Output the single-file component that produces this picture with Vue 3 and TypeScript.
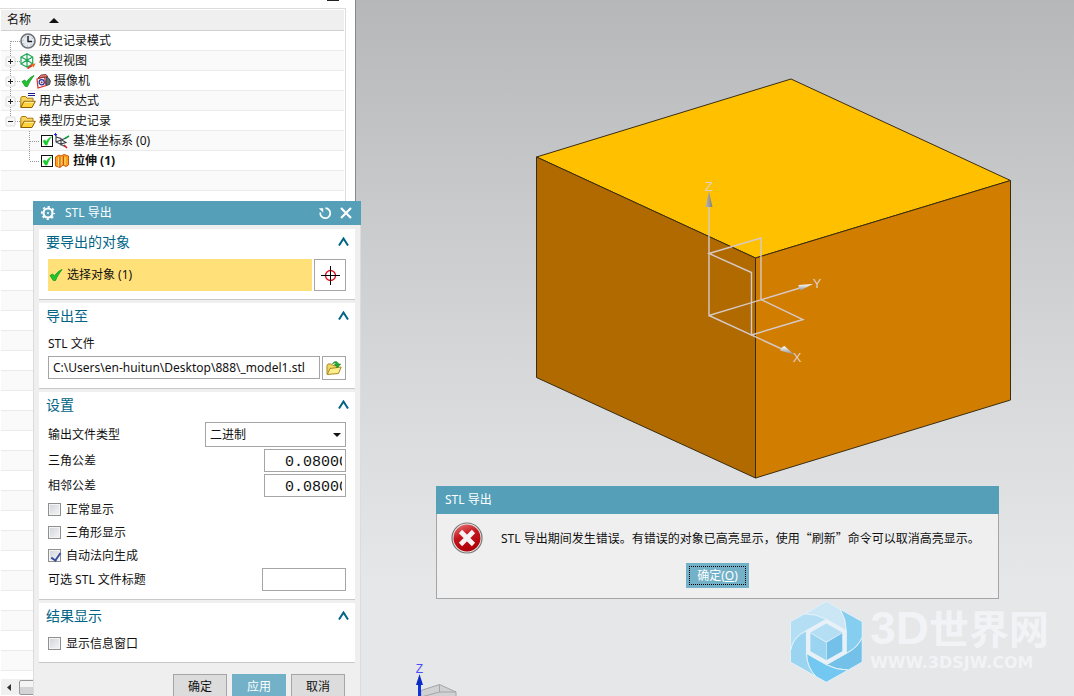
<script setup lang="ts">
import { ref } from 'vue'

interface TreeNode {
  label: string
  icon: 'clock' | 'views' | 'camera' | 'expr' | 'folder'
  expander?: 'plus' | 'minus'
  ticked?: boolean
  first?: boolean
}

interface ChildNode {
  label: string
  icon: 'csys' | 'extrude'
  last: boolean
  bold: boolean
}

const nodes: TreeNode[] = [
  { label: '历史记录模式', icon: 'clock', first: true },
  { label: '模型视图', icon: 'views', expander: 'plus' },
  { label: '摄像机', icon: 'camera', expander: 'plus', ticked: true },
  { label: '用户表达式', icon: 'expr', expander: 'plus' },
  { label: '模型历史记录', icon: 'folder', expander: 'minus' },
]

const children: ChildNode[] = [
  { label: '基准坐标系 (0)', icon: 'csys', last: false, bold: false },
  { label: '拉伸 (1)', icon: 'extrude', last: true, bold: true },
]

const emptyRows = 25

const filePath = ref('C:\\Users\\en-huitun\\Desktop\\888\\_model1.stl')
const fileType = ref('二进制')
const triangleTol = ref('0.08000')
const adjacentTol = ref('0.08000')
const headerText = ref('')
const showInfo = ref(false)
const options = ref([
  { id: 'normal', label: '正常显示', on: false },
  { id: 'triangle', label: '三角形显示', on: false },
  { id: 'autonormal', label: '自动法向生成', on: true },
])
</script>

<template>
  <div class="app" lang="zh-CN">
    <aside class="sidebar">
      <span class="pin"></span>
      <div class="tree">
        <button class="tree-head" type="button">
          名称
          <svg width="10" height="5" viewBox="0 0 10 5"><path d="M0 5 5 0l5 5z" fill="#111" /></svg>
        </button>
        <ul class="rows">
          <li v-for="n in nodes" :key="n.label" class="row">
            <svg class="gutter" width="19" height="20" viewBox="0 0 19 20">
              <path
                :d="n.first ? 'M9.5 10v10' : n.expander === 'minus' ? 'M9.5 0v10' : 'M9.5 0v20'"
                class="dots"
              />
              <path d="M10 10.500h9" class="dots" />
              <template v-if="n.expander">
                <rect x="5" y="6" width="9" height="9" rx="1" fill="#f8f8f8" stroke="#ddd" />
                <path d="M7 10.500h5" stroke="#222" />
                <path v-if="n.expander === 'plus'" d="M9.500 8v5" stroke="#222" />
              </template>
            </svg>
            <svg v-if="n.ticked" class="tick" width="14" height="14" viewBox="0 0 14 14">
              <path d="M1 7.500 3.800 6 5.300 8.200C7 5.500 9.500 3 13 1.500 10.500 5 8 8.500 6.500 12.500H4.300z" fill="#1fc42f" stroke="#0f9a20" stroke-width=".8" />
            </svg>
            <svg v-if="n.icon === 'clock'" class="ico" width="16" height="16" viewBox="0 0 16 16">
              <circle cx="8" cy="8" r="7" fill="#e6ebf2" stroke="#6c6f76" stroke-width="1.600" />
              <circle cx="8" cy="8" r="5" fill="none" stroke="#8d93a0" stroke-dasharray="1 2.900" />
              <path d="M8 3v5.500h4" fill="none" stroke="#1c1c24" stroke-width="1.400" />
            </svg>
            <svg v-else-if="n.icon === 'views'" class="ico" width="16" height="16" viewBox="0 0 16 16">
              <path d="M7 .8 12.700 4v7L7 14 1 11V4zM1 4l6 3 5.700-3M7 7v7M7 1v6M1 11l6-4 5.700 4" fill="none" stroke="#1fa658" stroke-width="1.200" />
              <path d="M7.500 15.500 12 12.500" stroke="#e0301e" stroke-width="1.600" />
              <path d="m11 11 4.500-.5-2 4z" fill="#f06418" />
            </svg>
            <svg v-else-if="n.icon === 'camera'" class="ico" width="16" height="16" viewBox="0 0 16 16">
              <path d="M2 6 9.500 4l1.500 8.500L3 15z" fill="#fff" stroke="#d8302a" stroke-width="1.200" />
              <path d="M3 5 6 2l5-.5 2 2.500-3 0z" fill="#e58078" stroke="#6d2723" stroke-width=".8" />
              <path d="m11 4 2.500 1 2 3-1 3.500-3 1z" fill="#6a707c" stroke="#222" stroke-width=".7" />
              <circle cx="6.700" cy="9.300" r="2.600" fill="#dfe8ff" stroke="#203a9a" stroke-width="1.200" />
              <circle cx="6.700" cy="9.300" r=".9" fill="#c01818" />
            </svg>
            <svg v-else class="ico" width="16" height="16" viewBox="0 0 16 16">
              <path d="M.8 14V5l1-1.500h4l1.200 1.700h6V9" fill="#f9d560" stroke="#a8790e" />
              <path d="M.8 14.500 4 8.300h11.300L12 14.500z" fill="#ffd23c" stroke="#8a5c04" />
              <path d="M4.500 9.300h9.500" stroke="#fff2b4" />
              <path v-if="n.icon === 'expr'" d="M8 .5h7M8 2.500h7" stroke="#1a1a8c" />
            </svg>
            <span>{{ n.label }}</span>
          </li>
          <li v-for="c in children" :key="c.label" class="row child">
            <svg class="branch" width="12" height="20" viewBox="0 0 12 20">
              <path :d="c.last ? 'M1.500 0v10' : 'M1.500 0v20'" class="dots" />
              <path d="M2 10.500h9" class="dots" />
            </svg>
            <svg width="12" height="13" viewBox="0 0 12 13">
              <rect x=".5" y="1.500" width="11" height="11" fill="#fff" stroke="#111" />
              <path d="M2 7 4 6l1.200 2C6.500 5.500 8 3.800 10.500 2.800 8.500 5 7.300 7.500 6 11H4.300z" fill="#14cc28" stroke="#14cc28" stroke-width=".6" />
            </svg>
            <svg v-if="c.icon === 'csys'" class="ico" width="16" height="16" viewBox="0 0 16 16">
              <path d="M2 2v7l9 4.500M2 9l10-4M2 4l5 1.500v7M7 6.500l5 3-5 1.500" fill="none" stroke="#3a4046" stroke-width="1.100" />
              <path d="M0 1.500h3M1.500 0v3" stroke="#1c2ce0" />
              <path d="m11 5.500 4-2.500" stroke="#14a040" stroke-width="1.600" />
              <path d="m10 12 3 3" stroke="#d01c30" stroke-width="1.600" />
            </svg>
            <svg v-else class="ico" width="16" height="16" viewBox="0 0 16 16">
              <path d="M1.500 4 5 2l2 1 3-1.500L14.500 3v9L12 13.500 9 12l-3 2.500L1.500 13z" fill="#f9a11c" stroke="#d2560c" />
              <path d="M4.500 4.500v9M7 4v8.500M11 4v8" stroke="#ffe08a" />
              <path d="M6 4v10M9.500 3v9" stroke="#b8480a" stroke-width=".8" />
            </svg>
            <span :class="{ bold: c.bold }">{{ c.label }}</span>
          </li>
          <li v-for="i in emptyRows" :key="i" class="row"></li>
        </ul>
      </div>
      <div class="hscroll">
        <button type="button" class="arrow" aria-label="向左滚动">
          <svg width="4" height="7" viewBox="0 0 4 7"><path d="M4 0v7L0 3.500z" fill="#333" /></svg>
        </button>
        <span class="thumb"></span>
      </div>
    </aside>

    <main class="viewport">
      <svg class="scene" viewBox="356 0 718 696" preserveAspectRatio="xMidYMid meet">
        <defs>
          <linearGradient id="coneV" x1="0" x2="1" y1="0" y2="0">
            <stop offset="0" stop-color="#b8b8b8" />
            <stop offset="1" stop-color="#808080" />
          </linearGradient>
          <linearGradient id="coneH" x1="0" x2="0" y1="0" y2="1">
            <stop offset="0" stop-color="#ffffff" />
            <stop offset="1" stop-color="#8e8e8e" />
          </linearGradient>
        </defs>
        <g stroke="#3a2c12" stroke-width="1" stroke-linejoin="round">
          <path d="M791 79 1010.500 180.500 755.500 258 536.500 157z" fill="#ffc000" />
          <path d="M536.500 157 755.500 258V478L536.500 377.500z" fill="#b06a00" />
          <path d="M755.500 258 1010.500 180.500V400L755.500 478z" fill="#d17d00" />
        </g>
        <g fill="none" stroke="#d6c9c6" stroke-width="1.400">
          <path d="M709 207V315.500L800 288M709 315.500 784 350" />
          <path d="M709 253.500 761 238V299.500L803 319.500 751.500 335V272.500z" />
        </g>
        <path d="M709 191.500 712.500 207h-7z" fill="url(#coneV)" />
        <path d="M813 284 800.500 290.500Q798 288 798.500 285z" fill="url(#coneH)" />
        <path d="M794 354.500 780 350.500Q781 347 784.500 346z" fill="url(#coneH)" />
        <g class="axis" text-anchor="middle">
          <text x="709" y="191">Z</text>
          <text x="817" y="288">Y</text>
          <text x="797" y="362">X</text>
        </g>
        <path d="M421 690.500 439.500 684.500 456 692V700H421z" fill="#d0d1d2" stroke="#a4a5a6" />
        <path d="M439.500 684.500V692L421 697M439.500 692 456 692" fill="none" stroke="#a4a5a6" />
        <path d="M419.500 684V700" stroke="#0c34d8" stroke-width="3" />
        <path d="M419.500 674 423 685h-7z" fill="#0a2cc4" />
        <text class="axis-z" x="419.500" y="673" text-anchor="middle">Z</text>
      </svg>
      <div class="watermark">
        <svg width="73" height="82" viewBox="332 363 219 247">
          <g stroke="#e4f1f8" stroke-width="3" stroke-linejoin="round">
            <path d="M375 402 441 364l42 24q18 30 18 64L441 418q-32-17-66-16z" fill="#cbe6f4" />
            <path d="M483 388 549 425v48q-14 30-48 48v-69q0-34-18-64z" fill="#85cef0" />
            <path d="M549 473v74l-42 24q-36 0-66-16l60-34q36-18 48-48z" fill="#73c0e8" />
            <path d="M507 571 441 608l-32-18q-27-28-28-69l60 34q30 16 66 16z" fill="#72c8f1" />
            <path d="M333 512v35l76 43q-27-28-28-69v-69q-42 20-48 60z" fill="#9ad4f0" />
            <path d="M333 512v-87l42-23q34-1 66 16l-60 34q-42 20-48 60z" fill="#b3def4" />
          </g>
          <path d="M441 418 501 452v69l-60 34-60-34v-69z" fill="#e8f1f7" />
          <path d="M441 431 489 458l-48 28-48-28z" fill="#b3def4" />
          <path d="M393 460 440 488v53l-47-27z" fill="#9ad4f0" />
          <path d="M489 460 442 488v53l47-27z" fill="#73c0e8" />
        </svg>
        <div class="wm-text">
          <div class="wm-name"><span class="wm-latin">3D</span>世界网</div>
          <div class="wm-url">WWW.3DSJW.COM</div>
        </div>
      </div>
    </main>

    <section class="dialog" aria-label="STL 导出">
      <header class="titlebar">
        <svg width="16" height="16" viewBox="0 0 16 16">
          <circle cx="8" cy="8" r="4.500" fill="none" stroke="#fff" stroke-width="2.200" />
          <circle cx="8" cy="8" r="6.200" fill="none" stroke="#fff" stroke-width="1.800" stroke-dasharray="2.200 2.670" stroke-dashoffset="1.100" />
          <circle cx="8" cy="8" r="1" fill="#fff" />
        </svg>
        <h1>STL 导出</h1>
        <button type="button" aria-label="重置">
          <svg width="14" height="14" viewBox="0 0 14 14">
            <path d="M7.500 2.200A5 5 0 1 1 2.300 6.500" fill="none" stroke="#fff" stroke-width="1.700" />
            <path d="M.8 2.200h4.400v4.400z" fill="#fff" />
          </svg>
        </button>
        <button type="button" aria-label="关闭">
          <svg width="12" height="12" viewBox="0 0 12 12"><path d="m1 1 10 10M11 1 1 11" stroke="#fff" stroke-width="2.200" /></svg>
        </button>
      </header>

      <div class="groups">
        <section class="group">
          <button class="group-head" type="button">
            要导出的对象
            <svg width="11" height="9" viewBox="0 0 11 9"><path d="M1 8.500 5.500 1.500l4.500 7" fill="none" stroke="#006487" stroke-width="2" /></svg>
          </button>
          <div class="pick">
            <button class="pick-main" type="button">
              <svg width="14" height="14" viewBox="0 0 14 14">
                <path d="M1 7.500 3.800 6 5.300 8.200C7 5.500 9.500 3 13 1.500 10.500 5 8 8.500 6.500 12.500H4.300z" fill="#1fc42f" stroke="#0f9a20" stroke-width=".8" />
              </svg>
              选择对象 (1)
            </button>
            <button class="pick-aim" type="button" aria-label="选择">
              <svg width="19" height="19" viewBox="0 0 19 19">
                <circle cx="9.500" cy="9.500" r="5" fill="none" stroke="#e01020" stroke-width="1.300" />
                <path d="M0 9.500h19M9.500 0v19" stroke="#000" />
              </svg>
            </button>
          </div>
        </section>

        <section class="group">
          <button class="group-head" type="button">
            导出至
            <svg width="11" height="9" viewBox="0 0 11 9"><path d="M1 8.500 5.500 1.500l4.500 7" fill="none" stroke="#006487" stroke-width="2" /></svg>
          </button>
          <label class="file-label" for="path">STL 文件</label>
          <div class="file">
            <input id="path" v-model="filePath" type="text" class="box path" />
            <button type="button" class="box browse" aria-label="浏览">
              <svg width="16" height="16" viewBox="0 0 16 16">
                <path d="M1 14V5.500L2 4h3.500L7 5.500h5V8" fill="#f0d860" stroke="#a88a20" />
                <path d="M1.200 14.500 4 8.500 15.200 7 12.500 13.500z" fill="#fbec8c" stroke="#a88a20" />
                <path d="M6.500 4C8 .5 12 1 12.500 4h2.300l-3.600 4L8.500 4h1.800C10 2.600 8 2.500 6.500 4z" fill="#25a832" stroke="#13801f" stroke-width=".5" />
              </svg>
            </button>
          </div>
        </section>

        <section class="group">
          <button class="group-head" type="button">
            设置
            <svg width="11" height="9" viewBox="0 0 11 9"><path d="M1 8.500 5.500 1.500l4.500 7" fill="none" stroke="#006487" stroke-width="2" /></svg>
          </button>
          <div class="fields">
            <div class="field">
              <label for="type">输出文件类型</label>
              <div class="select-wrap">
                <select id="type" v-model="fileType" class="box type">
                  <option>二进制</option>
                  <option>文本</option>
                </select>
                <svg class="caret" width="8" height="4" viewBox="0 0 8 4"><path d="M0 0h8L4 4z" fill="#111" /></svg>
              </div>
            </div>
            <div class="field">
              <label for="tri">三角公差</label>
              <input id="tri" v-model="triangleTol" type="text" class="box num" />
            </div>
            <div class="field">
              <label for="adj">相邻公差</label>
              <input id="adj" v-model="adjacentTol" type="text" class="box num" />
            </div>
          </div>
          <div class="checks">
            <label v-for="o in options" :key="o.id" class="check">
              <input v-model="o.on" type="checkbox" />{{ o.label }}
            </label>
          </div>
          <div class="field head-field">
            <label for="head">可选 STL 文件标题</label>
            <input id="head" v-model="headerText" type="text" class="box head" />
          </div>
        </section>

        <section class="group last">
          <button class="group-head" type="button">
            结果显示
            <svg width="11" height="9" viewBox="0 0 11 9"><path d="M1 8.500 5.500 1.500l4.500 7" fill="none" stroke="#006487" stroke-width="2" /></svg>
          </button>
          <label class="check"><input v-model="showInfo" type="checkbox" />显示信息窗口</label>
        </section>
      </div>

      <footer class="actions">
        <button type="button">确定</button>
        <button type="button" class="primary">应用</button>
        <button type="button">取消</button>
      </footer>
    </section>

    <section class="alert" role="alertdialog" aria-label="STL 导出">
      <header class="alert-title">STL 导出</header>
      <div class="alert-body">
        <svg width="32" height="32" viewBox="0 0 32 32">
          <defs>
            <linearGradient id="errRed" x1="0" x2="0.400" y1="0" y2="1">
              <stop offset="0" stop-color="#e87a7a" />
              <stop offset=".5" stop-color="#c4141c" />
              <stop offset="1" stop-color="#b00008" />
            </linearGradient>
          </defs>
          <circle cx="16" cy="16" r="15" fill="#e8e8e8" stroke="#777" stroke-width="1.200" />
          <circle cx="16" cy="16" r="13.500" fill="url(#errRed)" />
          <path d="m9.500 9.500 13 13M22.500 9.500l-13 13" stroke="#f4f4f4" stroke-width="4.600" />
        </svg>
        <p>STL 导出期间发生错误。有错误的对象已高亮显示，使用<span class="cjk">“刷新”</span>命令可以取消高亮显示。</p>
      </div>
      <button type="button" class="ok">确定(<u>O</u>)</button>
    </section>
  </div>
</template>

<style>
html,
body {
  margin: 0;
  overflow: hidden;
}
</style>

<style scoped>
.app {
  position: relative;
  display: grid;
  grid-template-columns: 356px 1fr;
  height: 100vh;
  overflow: hidden;
  font: 12px/20px "Noto Sans", "Noto Sans CJK SC", sans-serif;
  color: #111;
}
* {
  box-sizing: border-box;
}
button,
input,
select {
  font: inherit;
  color: inherit;
  margin: 0;
  padding: 0;
  border-radius: 0;
  outline: none;
}
button {
  border: 0;
  background: none;
}
svg {
  display: block;
  flex: none;
}

.sidebar {
  display: flex;
  flex-direction: column;
  min-height: 0;
  overflow: hidden;
  background: #fff;
  border-right: 1px solid #7f8c8d;
}
.pin {
  flex: none;
  align-self: flex-end;
  width: 12px;
  height: 1px;
  margin: 0 16px 7px 0;
  background: #222;
}
.tree {
  flex: none;
  margin-right: 9px;
  padding: 1px 1px 0 1px;
  border: solid #dcdcdc;
  border-width: 1px 1px 0 0;
}
.tree-head {
  display: flex;
  align-items: center;
  gap: 18px;
  width: 100%;
  height: 21px;
  padding-left: 6px;
  background: #efefef;
  border-bottom: 1px solid #d0d0d0;
}
.rows {
  margin: 0;
  padding: 0;
  list-style: none;
}
.row {
  display: flex;
  align-items: center;
  height: 20px;
  border-bottom: 1px solid #ebebeb;
  line-height: 19px;
  white-space: nowrap;
}
.row:nth-child(even) {
  background: #fafafa;
}
.ico {
  margin-right: 3px;
}
.tick {
  margin-left: 1px;
}
.gutter,
.branch {
  align-self: flex-start;
}
.child {
  padding-left: 27px;
  gap: 1px;
}
.child .ico {
  margin-right: 2px;
}
.dots {
  fill: none;
  stroke: #999;
  stroke-dasharray: 1 1;
}
.bold {
  font-weight: 700;
}
.hscroll {
  flex: none;
  display: flex;
  align-items: center;
  gap: 2px;
  height: 16px;
  margin: 8px 9px 0 1px;
  background: #f0f0f0;
}
.arrow {
  display: grid;
  place-items: center;
  width: 16px;
  height: 16px;
}
.thumb {
  width: 140px;
  height: 15px;
  border: 1px solid #989898;
  border-radius: 2px;
  background: linear-gradient(#f4f4f4 45%, #d4d4d6 50%);
}

.viewport {
  position: relative;
  min-width: 0;
  min-height: 0;
  background: linear-gradient(#b6b7b9, #c9cacc 30%, #d9dadc 58%, #e6e7e9 84%, #e6e7e9);
}
.scene {
  width: 100%;
  height: 100%;
}
.axis {
  font: 13px "Liberation Sans", sans-serif;
  fill: #ddd0cc;
}
.axis-z {
  font: 12px "Liberation Sans", sans-serif;
  fill: #4a4cff;
}
.watermark {
  position: absolute;
  right: 25px;
  bottom: 13px;
  display: flex;
  align-items: center;
  gap: 7px;
  color: #f2f3f6;
}
.wm-text {
  display: flex;
  flex-direction: column;
  gap: 2px;
  padding-bottom: 8px;
}
.wm-name {
  font: 700 40px/46px "Liberation Sans", "Noto Sans CJK SC", sans-serif;
  white-space: nowrap;
}
.wm-latin {
  font-size: 46px;
}
.wm-url {
  font: 700 16px/16px "DejaVu Sans", sans-serif;
}

.dialog {
  position: absolute;
  left: 33px;
  top: 201px;
  width: 328px;
  background: #efefef;
  border: solid #dcdcdc;
  border-width: 0 1px;
}
.titlebar {
  display: flex;
  align-items: center;
  gap: 8px;
  height: 24px;
  margin: 0 -1px;
  padding: 0 9px 0 7px;
  background: #559fb9;
  color: #fff;
}
.titlebar h1 {
  flex: 1;
  margin: 0 0 0 1px;
  font-size: 12px;
  font-weight: 400;
}
.groups {
  display: flex;
  flex-direction: column;
  gap: 3px;
  padding: 4px 5px 0;
}
.group {
  display: flex;
  flex-direction: column;
  padding: 0 9px 8px;
  background: #fff;
  border-bottom: 1px solid #c8c8c8;
}
.group-head {
  display: flex;
  justify-content: space-between;
  align-items: center;
  height: 26px;
  margin: 0 -4px 0 -2px;
  font-size: 14px;
  color: #006487;
}
.group-head svg {
  margin: 0 1px 2px 0;
}
.pick {
  display: flex;
  gap: 2px;
  margin-top: 4px;
}
.pick-main {
  flex: 1;
  display: flex;
  align-items: center;
  gap: 4px;
  height: 32px;
  padding-left: 1px;
  background: #ffe079;
}
.pick-aim {
  display: grid;
  place-items: center;
  width: 32px;
  height: 32px;
  border: 1px solid #a5a5a5;
  background: #fff;
}
.box {
  border: 1px solid #a5a5a5;
  background: #fff;
}
.file-label {
  margin: 5px 0 2px;
}
.file {
  display: flex;
  gap: 2px;
}
.path {
  flex: 1;
  min-width: 0;
  height: 23px;
  padding: 0 4px;
}
.browse {
  display: grid;
  place-items: center;
  width: 24px;
  height: 24px;
}
.fields {
  display: flex;
  flex-direction: column;
  gap: 2px;
  margin-top: 4px;
}
.field {
  display: flex;
  justify-content: space-between;
  align-items: center;
}
.select-wrap {
  position: relative;
}
.type {
  display: block;
  width: 141px;
  height: 25px;
  padding: 0 4px;
  appearance: none;
}
.caret {
  position: absolute;
  right: 5px;
  top: 11px;
  pointer-events: none;
}
.num {
  width: 82px;
  height: 23px;
  padding: 4px 3px 0 20px;
  font: 15px "Liberation Mono", monospace;
}
.checks {
  display: flex;
  flex-direction: column;
  gap: 3px;
  margin-top: 3px;
}
.check {
  display: flex;
  align-items: center;
  gap: 5px;
  height: 20px;
}
.check input {
  position: relative;
  width: 13px;
  height: 13px;
  margin-bottom: 2px;
  appearance: none;
  border: 1px solid #8e8f8f;
  background: linear-gradient(135deg, #cfd3d9, #f6f6f6);
  box-shadow: inset 0 0 0 1px #f4f4f4;
}
.check input:checked::after {
  content: "";
  position: absolute;
  left: 4px;
  top: 1px;
  width: 4px;
  height: 8px;
  border: solid #3c4f9c;
  border-width: 0 2px 2px 0;
  transform: rotate(35deg);
}
.head-field {
  margin-top: 2px;
}
.head {
  width: 84px;
  height: 23px;
}
.last .check {
  margin-top: 5px;
}
.actions {
  display: flex;
  justify-content: flex-end;
  gap: 5px;
  padding: 11px 15px 11px 0;
}
.actions button {
  width: 54px;
  height: 26px;
  border: 1px solid #a5a5a5;
  background: #dcdcdc;
}
.actions .primary {
  border-color: #72b1c7;
  background: #72b1c7;
  color: #fff;
}

.alert {
  position: absolute;
  left: 436px;
  top: 486px;
  display: flex;
  flex-direction: column;
  width: 563px;
  padding-bottom: 10px;
  background: #efefef;
  border: 1px solid #a5a5a5;
  border-top: 0;
}
.alert-title {
  height: 28px;
  margin: 0 -1px;
  padding: 0 9px;
  line-height: 28px;
  background: #559fb9;
  color: #fff;
}
.alert-body {
  display: flex;
  align-items: center;
  gap: 18px;
  padding: 8px 14px 9px;
}
.alert-body p {
  margin: 0;
  white-space: nowrap;
}
.cjk {
  font-family: "Noto Sans CJK SC", sans-serif;
}
.ok {
  align-self: center;
  width: 63px;
  height: 25px;
  background: #72b1c7;
  color: #fff;
  outline: 1px dotted #000;
  outline-offset: -4px;
}
</style>
